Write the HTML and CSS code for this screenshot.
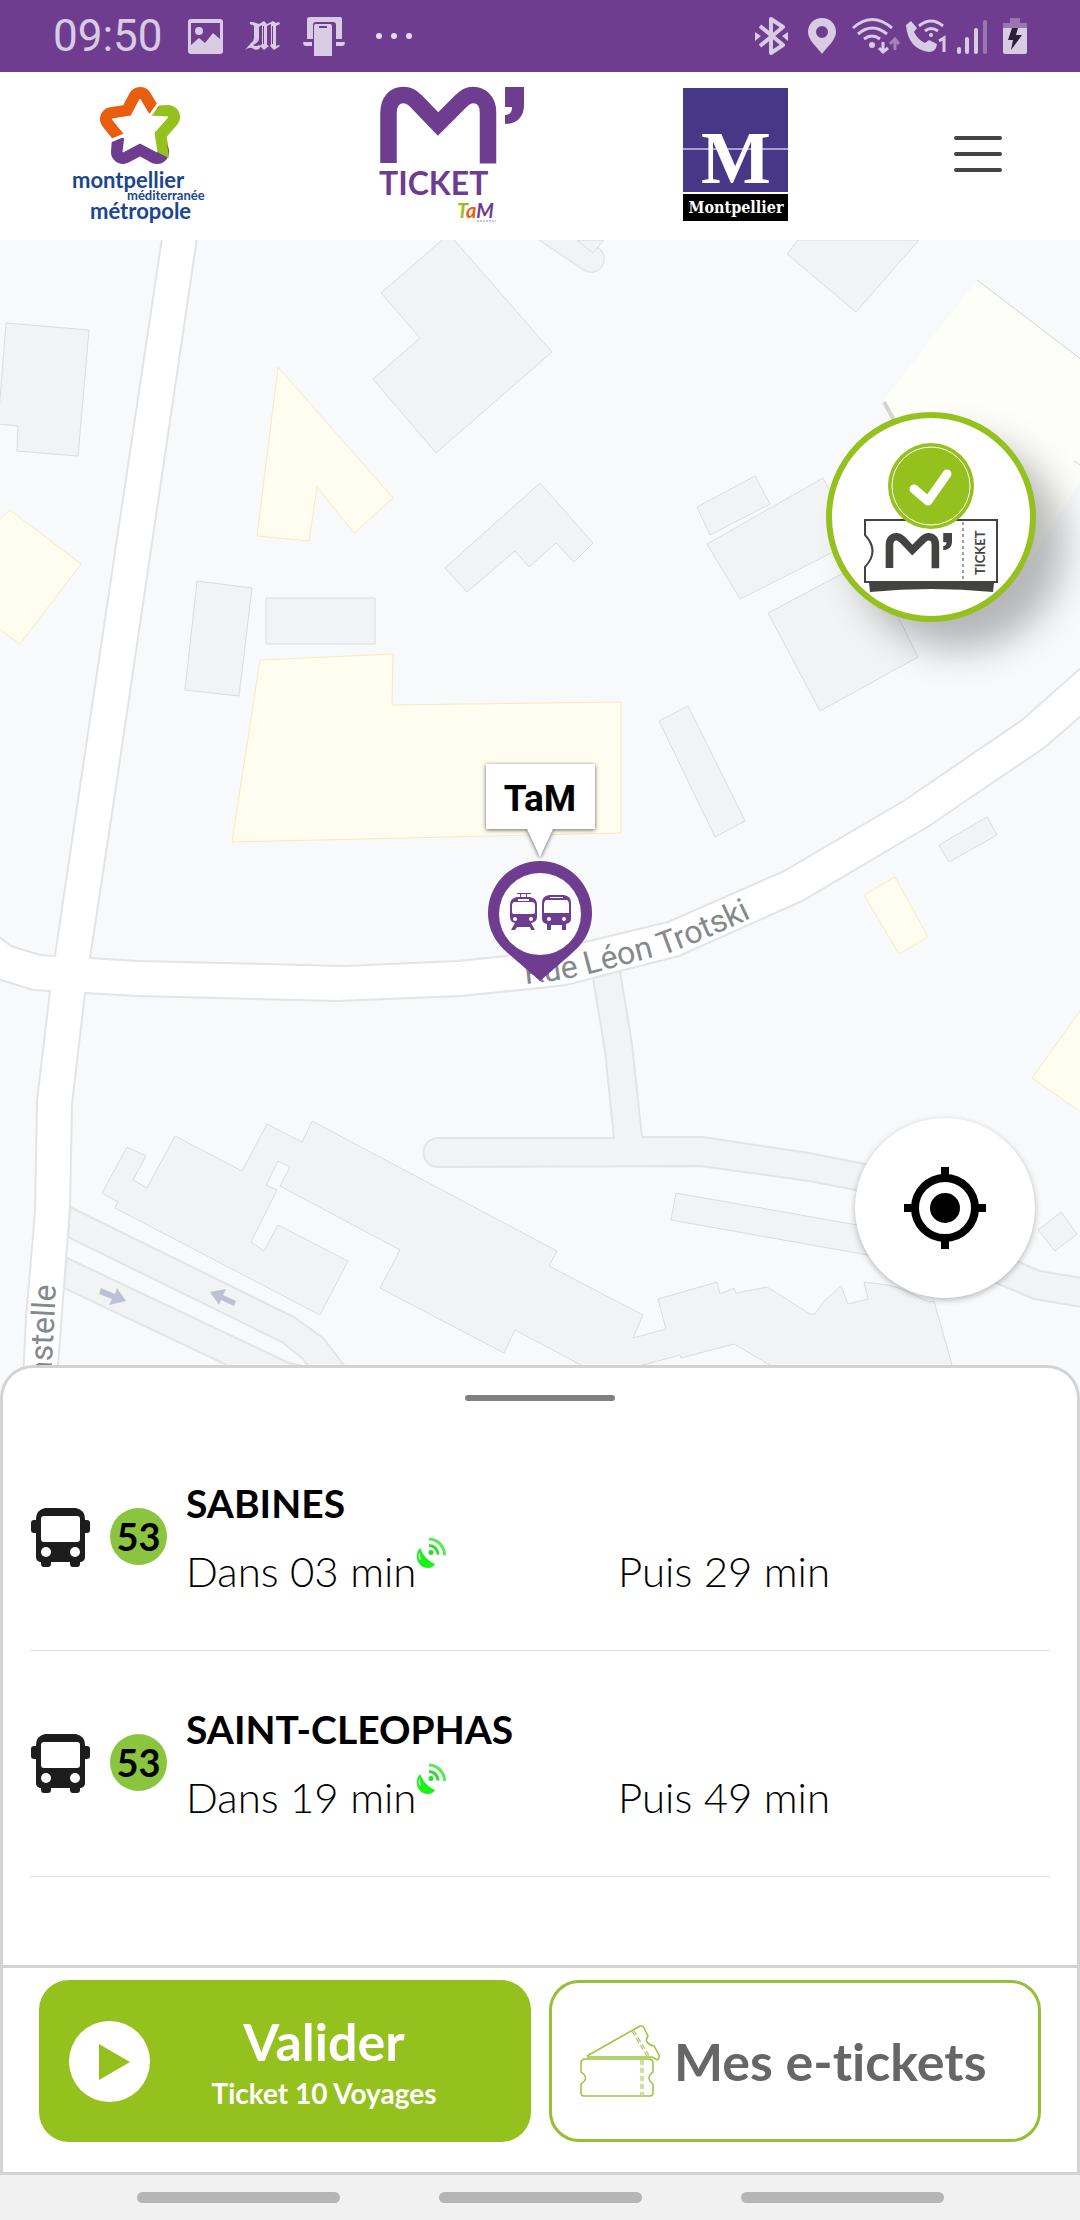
FILE: index.html
```html
<!DOCTYPE html>
<html lang="fr">
<head>
<meta charset="utf-8">
<meta name="viewport" content="width=device-width, initial-scale=1">
<title>M'Ticket TaM</title>
<link rel="stylesheet" href="styles.css">
</head>
<body>
<svg class="defs" aria-hidden="true">
  <symbol id="m-mark" viewBox="380 87 145 78" overflow="visible">
    <path d="M388.500 163V113C388.500 101 395 95 403.500 95C409 95 413 98 416 101L438 124L461 101C464 98 468 95 473 95C481 95 488 101 488 112V163.500" fill="none" stroke="currentColor" stroke-width="16.500"/>
    <path d="M505 87H524V105C524 117 517 124 505 124V115C510 115 512 112 512 107H505Z" fill="currentColor"/>
  </symbol>
  <symbol id="bus" viewBox="0 0 59 60">
    <path fill="#1d1d1d" fill-rule="evenodd" d="M14 1H45Q54 3 54 12V13H56Q59 13 59 16V23Q59 26 56 26H54V50Q54 54 50 55H49V57Q49 60 46 60H42Q39 60 39 57V55H20V57Q20 60 17 60H13Q10 60 10 57V55H9Q5 54 5 50V26H3Q0 26 0 23V16Q0 13 3 13H5V12Q5 3 14 1ZM13 9Q10 9 10 12V32Q10 35 13 35H46Q49 35 49 32V12Q49 9 46 9Z"/>
    <circle cx="15" cy="45" r="5" fill="#fff"/><circle cx="44" cy="45" r="5" fill="#fff"/>
  </symbol>
  <symbol id="live" viewBox="0 0 30 31">
    <path fill="#1bf01b" d="M4 11C-3 19 2 31 12 31Q17 31 19 27Q9 23 4 11Z"/>
    <path fill="#fff" d="M3 16Q2 21 4 23L5 22Q3 19 4 16Z"/>
    <circle cx="15" cy="15.500" r="2.500" fill="#2fd92f"/>
    <path fill="none" stroke="#30dc30" stroke-width="3" d="M13 8.500A9 9 0 0 1 22 17.500"/>
    <path fill="none" stroke="#56ea56" stroke-width="3" d="M13 2A16 16 0 0 1 28.500 18"/>
  </symbol>
</svg>

<div class="status">
  <div class="status-left">
    <time class="clock">09:50</time>
    <svg width="35" height="35" viewBox="0 0 35 35" aria-hidden="true"><path fill="#d9cbe3" fill-rule="evenodd" d="M3 0H32Q35 0 35 3V32Q35 35 32 35H3Q0 35 0 32V3Q0 0 3 0ZM3 4V26L11 19L17 24L25 14L32 20V4Z"/><circle cx="11" cy="12" r="4" fill="#d9cbe3"/></svg>
    <svg width="36" height="30" viewBox="0 0 36 30" fill="#d9cbe3" aria-hidden="true"><path d="M5 1Q4 4 8 4L9 5V17Q9 20 6 22L0 29Q4 26 7 27Q11 30 14 28L16 25L14 24Q12 26 8 24Q13 22 14 18V6L17 4V23L15 25L19 29L24 25L22 24V5L26 3V23L25 25L29 29L35 25L34 24L31 25V5L35 3L34 1L31 2L28 0L22 3L19 0L14 3L8 1Z"/><path stroke="#6f3d8f" d="M18.500 5V23M27.500 5V23"/></svg>
    <svg width="42" height="40" viewBox="0 0 42 40" aria-hidden="true"><path fill="#d9cbe3" d="M7 1H37Q39 1 39 3V23H33V9Q33 6 30 6H13Q10 6 10 9V23H4V3Q4 1 7 1ZM0 26H9V30H2Q0 29 0 26ZM33 26H42Q42 29 40 30H33ZM13 8H27Q29 8 29 10V40H11V10Q11 8 13 8Z"/><path stroke="#6f3d8f" stroke-width="2" d="M16 11H24"/></svg>
    <svg width="38" height="8" viewBox="0 0 38 8" fill="#e4daeb" aria-hidden="true"><circle cx="4" cy="4" r="3"/><circle cx="19" cy="4" r="3"/><circle cx="34" cy="4" r="3"/></svg>
  </div>
  <div class="status-right">
    <svg width="50" height="42" viewBox="748 16 50 42" aria-hidden="true"><path fill="none" stroke="#d9cbe3" stroke-width="4" stroke-linejoin="round" d="M760 27L783 46L771 54V20L783 28L760 47"/><path fill="#d9cbe3" d="M755 33L761 37L755 42ZM788 33L782 37L788 42Z"/></svg>
    <svg width="46" height="42" viewBox="798 16 46 42" aria-hidden="true"><path fill="#d9cbe3" fill-rule="evenodd" d="M822 19C830 19 836 25 836 33C836 41 827 48 822 55C817 48 808 41 808 33C808 25 814 19 822 19ZM822 27A6 6 0 1 0 822 39A6 6 0 1 0 822 27Z"/></svg>
    <svg width="59" height="42" viewBox="844 16 59 42" fill="none" aria-hidden="true"><path stroke="#d9cbe3" stroke-width="3" d="M853 29Q872 12 892 29M858 35Q872 23 887 35M864 40Q872 34 880 40"/><circle cx="872" cy="46" r="3" fill="#d9cbe3"/><path stroke="#d9cbe3" stroke-width="3" d="M883 43V53M879 49L883 53L888 49"/><path stroke="#a684b9" stroke-width="3" d="M895 51V41M890 45L895 40L899 45"/></svg>
    <svg width="49" height="42" viewBox="903 16 49 42" aria-hidden="true"><path fill="#d9cbe3" d="M906 26L911 22L917 29L914 33Q918 41 925 44L929 41L937 45Q936 53 929 53Q908 50 906 26Z"/><path fill="none" stroke="#d9cbe3" stroke-width="3" d="M919 27Q931 17 943 27M925 32Q931 27 938 32"/><circle cx="931" cy="36" r="2" fill="#d9cbe3"/><path fill="none" stroke="#d9cbe3" stroke-width="3" d="M939 42L944 39V53"/></svg>
    <svg width="44" height="42" viewBox="952 16 44 42" stroke="#d9cbe3" stroke-width="4" stroke-linecap="round" aria-hidden="true"><path d="M959 50V53M967 40V53M976 31V53"/><path stroke="#9b76b1" d="M985 23V53"/></svg>
    <svg width="38" height="42" viewBox="996 16 38 42" aria-hidden="true"><path fill="#9b76b1" d="M1010 19H1020V24H1027V30H1003V24H1010Z"/><path fill="#d9cbe3" d="M1003 29H1027V53Q1027 55 1025 55H1005Q1003 55 1003 53Z"/><path fill="#2d1d3b" d="M1012 29H1018L1016 36H1022L1011 51L1013 41H1008Z"/></svg>
  </div>
</div>

<header class="header">
  <svg class="logo" width="135" height="138" viewBox="72 85 135 138" role="img" aria-label="Montpellier Méditerranée Métropole">
    <g fill="none" stroke-width="24" stroke-linejoin="round">
      <path stroke="#95c11f" d="M150 118L168 117L154 133L157 152"/>
      <path stroke="#6f3d8f" d="M124 138L123 152L140 143L157 152"/>
      <path stroke="#e85d0e" d="M149 114L140 99L131 116L112 119L124 134"/>
    </g>
    <circle cx="157" cy="152" r="12" fill="#6f3d8f"/>
    <path fill="#95c11f" d="M154 133L166 136L169 158L157 152Z"/>
    <path fill="#fff" stroke="#fff" d="M140 99L150 116L168 117L154 133L157 152L140 143L123 152L125 135L112 119L131 116Z"/>
    <path stroke="#fff" stroke-width="3" d="M149 117L159 103M127 134L110 141"/>
    <g class="metro-text"><text x="72" y="188" class="metro-lg">montpellier</text><text x="127" y="200" class="metro-sm">méditerranée</text><text x="90" y="219" class="metro-lg">métropole</text></g>
  </svg>
  <svg class="logo" width="184" height="138" viewBox="353 85 184 138" role="img" aria-label="M'Ticket TaM">
    <use href="#m-mark" x="380" y="87" width="145" height="78" color="#6f3d8f"/>
    <text x="379" y="195" class="ticket-word">TICKET</text>
    <text x="457" y="218" class="tam-word"><tspan fill="#95c11f">T</tspan><tspan fill="#e85d0e">a</tspan><tspan fill="#6f3d8f">M</tspan></text>
    <path stroke="#8d8fc0" stroke-dasharray="2 1" d="M477 221H496"/>
  </svg>
  <svg class="logo" width="105" height="138" viewBox="683 85 105 138" role="img" aria-label="Ville de Montpellier">
    <path fill="#463886" d="M683 88H788V192H683Z"/><path stroke="#a79fcc" stroke-width="2" d="M683 149H788"/>
    <path fill="#000" d="M683 194H788V221H683Z"/>
    <text x="736" y="183" class="city-m">M</text><text x="736" y="213" class="city-name">Montpellier</text>
  </svg>
  <button class="menu" type="button" aria-label="Menu"><svg width="48" height="38" viewBox="0 0 48 38" stroke="#444" stroke-width="4" stroke-linecap="round" aria-hidden="true"><path d="M2 3H46M2 19H46M2 35H46"/></svg></button>
</header>

<main class="map">
  <svg class="map-canvas" viewBox="0 240 1080 1161" preserveAspectRatio="xMidYMin slice" role="img" aria-label="Plan du quartier, arrêt TaM, Rue Léon Trotski">
    <path fill="none" stroke="#e3e4e7" stroke-width="28" stroke-linecap="round" d="M535 221L591 259"/>
    <path fill="none" stroke="#f1f3f4" stroke-width="25" stroke-linecap="round" d="M535 221L591 259"/>
    <g class="lane">
      <path d="M70 1207L294 1317L323 1338L350 1373L350 1401H318V1380L303 1359L282 1342L68 1237Z"/>
      <path d="M67 1258L289 1363L330 1372V1401H280L227 1365L64 1288Z"/>
      <path d="M438 1138L614 1138L605 1051L593 978L585 960L618 955L620 971L632 1044L642 1137L703 1137L809 1153L865 1164L1019 1262L1040 1271L1082 1278V1307L1034 1299L996 1283L880 1195L856 1190L809 1181L700 1166L438 1167A14 14 0 0 1 438 1138Z"/>
    </g>
    <g class="block">
      <path d="M6 323L89 330L78 456L17 451L18 426L-2 424Z"/>
      <path d="M449 234L381 293L420 338L373 379L436 453L552 352Z"/>
      <path d="M197 581L252 588L239 696L185 690Z"/>
      <path d="M266 598H375V644H266Z"/>
      <path d="M445 568L540 483L593 543L574 562L556 543L529 567L515 551L467 592Z"/>
      <path d="M577 240L593 253L604 240Z"/>
      <path d="M798 240L787 254L856 312L919 240Z"/>
      <path d="M755 476L770 504L710 535L697 507Z"/>
      <path d="M707 544L823 478L857 540L740 599Z"/>
      <path d="M768 613L870 559L918 657L820 711Z"/>
      <path d="M659 721L688 706L745 821L715 837Z"/>
      <path d="M939 845L987 817L997 835L949 862Z"/>
      <path d="M676 1193L880 1229L890 1259L671 1220Z"/>
      <path d="M1061 1212L1077 1234L1055 1251L1038 1230Z"/>
      <path d="M127 1147L146 1156L133 1180L147 1188L175 1136L242 1171L267 1124L302 1142L312 1121L540 1242L557 1251L549 1266L643 1315L633 1338L666 1329L658 1299L717 1282L720 1294L734 1288L736 1293L767 1287L810 1314L815 1314L824 1301L841 1286L848 1304L868 1299L864 1282L888 1285L902 1289L929 1302L934 1301L952 1365L960 1401L830 1401L770 1365L734 1344L681 1358L680 1355L643 1365L600 1375L581 1365L515 1330L504 1353L380 1288L400 1250L280 1186L290 1167L278 1161L266 1185L277 1190L251 1242L264 1251L278 1225L348 1261L320 1315L115 1208L118 1202L102 1193Z"/>
    </g>
    <path fill="#fdfdfa" d="M977 280L1082 359V480L1030 560L940 520L883 401Z"/>
    <path fill="none" stroke="#d3d3cf" d="M977 280L1082 360M1074 461L1082 466"/><path stroke="#d5d4cf" stroke-width="4" d="M884 402L895 422"/>
    <g class="shop">
      <path d="M278 367L393 498L354 533L317 487L309 541L257 536Z"/>
      <path d="M-2 521L10 510L81 564L20 644L-2 628Z"/>
      <path d="M260 660L393 654L392 705L621 702V833L232 842Z"/>
      <path d="M864 895L895 877L928 937L899 954Z"/>
      <path d="M1082 1008L1032 1078L1082 1113Z"/>
    </g>
    <path class="street" d="M162 238L78 800L55 956L40 955L11 946L-2 936V979L33 990L50 991L37 1101L35 1212L26 1318L22 1401H56L58 1365L70 1207L72 1104L85 993L138 996L337 1001L461 996L540 988L566 985L620 971L679 956L802 901L929 826L967 800L1044 748L1082 715V667L1022 720L905 800L784 871L668 922L585 942L506 956L458 961L344 966L138 961L90 958L114 800L197 238Z"/>
    <path fill="#bdc1d3" d="M101 1288L115 1294L117 1288L126 1301L109 1305L112 1299L99 1294ZM236 1301L223 1295L226 1289L210 1292L219 1305L221 1300L234 1306Z"/>
    <path id="trotski" fill="none" d="M525 984Q560 981 589 974L669 953Q712 937 755 916L800 894"/>
    <text class="road-name"><textPath href="#trotski">Rue Léon Trotski</textPath></text>
    <text class="road-name" text-anchor="end" transform="translate(56 1285) rotate(-87)">astelle</text>

    <path class="callout" d="M486 764H595V829H553L540 857L527 829H486Z"/>
    <text class="stop-name" x="540" y="811">TaM</text>
    <path fill="#6f3d8f" d="M540 861A52 52 0 0 1 592 913C592 932 582 945 570 955L540 981L510 955C498 945 488 932 488 913A52 52 0 0 1 540 861Z"/>
    <circle cx="540" cy="914" r="41" fill="#fff"/>
    <g fill="#6f3d8f">
      <path fill-rule="evenodd" d="M517 897H530Q537 898 537 905V917Q537 922 531 923L535 930H531L530 927H517L515 930H511L515 923Q510 922 510 917V905Q510 898 517 897ZM515 902Q512 902 512 906V912Q512 914 514 914H533Q535 914 535 912V906Q535 902 532 902Z"/>
      <path fill="none" stroke="#6f3d8f" d="M517 893.500H531M520.500 893V897M526.500 893V897"/>
      <path fill-rule="evenodd" d="M549 895H564Q571 896 571 903V919Q571 923 566 924V930H562V925H551V930H547V924Q542 923 542 919V903Q542 896 549 895ZM546 900Q544 901 544 905V913H569V905Q569 901 567 900Z"/>
    </g>
    <g fill="#fff"><path d="M518 899H529V901H518ZM550 897H563V898H550Z"/><circle cx="515" cy="919" r="2"/><circle cx="531" cy="919" r="2"/><circle cx="549" cy="919" r="2"/><circle cx="564" cy="919" r="2"/></g>
  </svg>

  <button class="ticket-fab" type="button" aria-label="Ticket valide">
    <svg width="198" height="198" viewBox="6 6 198 198" aria-hidden="true">
      <path fill="#fff" stroke="#434342" stroke-width="2" d="M39 108H171V170H39V155Q54 139 39 123Z"/>
      <path stroke="#434342" stroke-dasharray="3 3" d="M137 110V169"/>
      <path fill="#434342" d="M43 171H168L167 180Q105 174 44 180Z"/>
      <use href="#m-mark" x="59" y="121" width="68" height="36" color="#434342"/>
      <text class="fab-word" transform="translate(159 163) rotate(-90)">TICKET</text>
      <circle cx="105" cy="74" r="43" fill="#95c11f"/><circle cx="105" cy="74" r="39" fill="none" stroke="#fff"/>
      <path fill="none" stroke="#fff" stroke-width="9" stroke-linecap="round" stroke-linejoin="round" d="M88 77L102 89L121 62"/>
    </svg>
  </button>
  <button class="locate" type="button" aria-label="Ma position">
    <svg width="82" height="82" viewBox="0 0 82 82" fill="none" stroke="#000" stroke-width="8" aria-hidden="true"><circle cx="41" cy="41" r="30"/><circle cx="41" cy="41" r="15" fill="#000" stroke="none"/><path d="M41 0V9M41 73V82M0 41H9M73 41H82"/></svg>
  </button>
</main>

<section class="sheet" aria-label="Prochains passages">
  <div class="handle"></div>
  <ul class="lines">
    <li class="line">
      <svg class="line-bus" aria-hidden="true"><use href="#bus"/></svg>
      <span class="badge">53</span>
      <div class="info">
        <h2 class="dest">SABINES</h2>
        <span class="next">Dans 03 min<svg class="live" aria-hidden="true"><use href="#live"/></svg></span>
        <span class="next">Puis 29 min</span>
      </div>
    </li>
    <li class="line">
      <svg class="line-bus" aria-hidden="true"><use href="#bus"/></svg>
      <span class="badge">53</span>
      <div class="info">
        <h2 class="dest">SAINT-CLEOPHAS</h2>
        <span class="next">Dans 19 min<svg class="live" aria-hidden="true"><use href="#live"/></svg></span>
        <span class="next">Puis 49 min</span>
      </div>
    </li>
  </ul>
</section>

<footer class="actions">
  <button class="btn btn-primary" type="button">
    <svg width="81" height="81" viewBox="0 0 81 81" aria-hidden="true"><circle cx="40.500" cy="40.500" r="40.500" fill="#fff"/><path fill="#95c11f" d="M30 23L61 41L30 59Z"/></svg>
    <span class="btn-text"><span class="btn-title">Valider</span><span class="btn-sub">Ticket 10 Voyages</span></span>
  </button>
  <button class="btn btn-outline" type="button">
    <svg width="80" height="72" viewBox="0 0 80 72" fill="none" stroke="#9cc43b" stroke-width="1.500" aria-hidden="true">
      <path d="M4 34H70Q73 35 73 38V47Q65 53 73 59V68Q73 71 70 71H4Q1 71 1 68V59Q10 53 1 47V38Q1 35 4 34ZM7 31L60 1Q62 0 64 3L68 11Q63 18 74 21L79 30Q80 34 77 35L72 32H7"/>
      <path stroke-width="3" stroke-dasharray="5 3" d="M62 35V71M53 6L68 31"/>
      <path stroke="#fff" stroke-width="1" d="M62 35V71M53 6L68 31"/>
    </svg>
    <span class="btn-title">Mes e-tickets</span>
  </button>
</footer>
<nav class="gesture" aria-hidden="true"><span class="pill"></span><span class="pill"></span><span class="pill"></span></nav>
</body>
</html>
```
FILE: styles.css
```css
* { box-sizing: border-box; }

body {
  margin: 0;
  min-height: 100vh;
  display: flex;
  flex-direction: column;
  background: #fff;
  color: #000;
  font-family: Lato, "Open Sans", sans-serif;
  font-variant-ligatures: none;
}

button {
  margin: 0;
  padding: 0;
  border: 0;
  background: none;
  font: inherit;
  color: inherit;
}

svg { display: block; flex: none; }
.defs { position: absolute; width: 0; height: 0; }

/* Status bar */
.status {
  display: flex;
  justify-content: space-between;
  align-items: center;
  height: 72px;
  padding: 0 46px 0 53px;
  background: #6f3d8f;
}
.status-left { display: flex; align-items: center; gap: 22px; }
.status-left > :first-child { margin-right: 3px; }
.status-left > :last-child { margin-left: 8px; }
.status-right { display: flex; align-items: center; }
.clock { font: 400 44px/72px Roboto, sans-serif; color: #d9cbe3; }

/* Logos */
.header {
  display: flex;
  justify-content: space-between;
  align-items: center;
  height: 168px;
  padding: 0 58px 4px 72px;
}
.logo { overflow: visible; }
.metro-text { fill: #1b4690; font-weight: 700; }
.metro-lg { font-size: 22px; }
.metro-sm { font-size: 13px; }
.ticket-word { font-size: 32px; font-weight: 700; fill: #6f3d8f; }
.tam-word { font-size: 20px; font-weight: 700; font-style: italic; }
.city-m { font: 700 74px "Liberation Serif", serif; fill: #fff; text-anchor: middle; }
.city-name { font: 700 16px "DejaVu Serif Condensed", "DejaVu Serif", serif; fill: #fff; text-anchor: middle; }
.menu { display: grid; place-items: center; width: 88px; height: 88px; }

/* Map */
.map {
  position: relative;
  flex: 1;
  min-height: 600px;
  overflow: hidden;
  background: #f8f9fb;
}
.map-canvas { position: absolute; inset: 0; width: 100%; height: 100%; }
.block { fill: #f1f3f4; stroke: #dadce0; }
.lane { fill: #f1f3f4; stroke: #e3e4e7; stroke-width: 2px; }
.shop { fill: #fffcf0; stroke: #f9e9bd; }
.street { fill: #fff; stroke: #e3e4e7; stroke-width: 2px; }
.road-name { font: 400 32px Roboto, sans-serif; fill: #83898c; }
.callout { fill: #fff; filter: drop-shadow(0 1px 2px #0009); }
.stop-name { font: 700 37px Roboto, sans-serif; text-anchor: middle; }
.ticket-fab {
  position: absolute;
  top: 172px;
  right: 44px;
  display: grid;
  place-items: center;
  width: 210px;
  height: 210px;
  border: 6px solid #95c11f;
  border-radius: 50%;
  background: #fff;
  box-shadow: 28px 28px 36px #0004;
}
.fab-word { font-size: 13px; font-weight: 700; fill: #434342; }
.locate {
  position: absolute;
  right: 45px;
  bottom: 103px;
  display: grid;
  place-items: center;
  width: 180px;
  height: 180px;
  border-radius: 50%;
  background: #fff;
  box-shadow: 0 2px 6px #0004;
}

/* Departures */
.sheet {
  position: relative;
  margin-top: -36px;
  padding: 27px 27px 88px;
  border: 3px solid #d3d3d3;
  border-width: 3px 3px 0;
  border-radius: 33px 33px 0 0;
  background: #fff;
}
.handle { width: 150px; height: 6px; margin: 0 auto 24px; border-radius: 3px; background: #808080; }
.lines { margin: 0; padding: 0; list-style: none; }
.line {
  display: flex;
  align-items: center;
  height: 226px;
  padding-bottom: 2px;
  border-bottom: 1px solid #dedede;
}
.line-bus { width: 59px; height: 60px; margin: 0 20px 0 1px; }
.badge {
  width: 57px;
  height: 57px;
  border-radius: 50%;
  background: #8bc53f;
  font-size: 38px;
  font-weight: 700;
  line-height: 57px;
  text-align: center;
}
.info {
  flex: 1;
  display: grid;
  grid-template-columns: 1fr 1fr;
  margin-left: 19px;
  line-height: 68px;
}
.dest { grid-column: 1 / -1; margin: 0; font-size: 39px; font-weight: 700; }
.next { display: flex; font-size: 42px; font-weight: 300; }
.live { width: 30px; height: 31px; }

/* Actions */
.actions {
  display: grid;
  grid-template-columns: 1fr 1fr;
  gap: 18px;
  padding: 12px 36px 30px;
  border: 3px solid #d3d3d3;
}
.btn {
  display: flex;
  align-items: center;
  height: 162px;
  border-radius: 30px;
}
.btn-primary { padding: 0 33px 0 30px; background: #95c11f; color: #fff; }
.btn-outline { gap: 14px; padding: 0 28px; border: 3px solid #95bf34; color: #666; white-space: nowrap; }
.btn-text { flex: 1; display: flex; flex-direction: column; align-items: center; }
.btn-title { font-size: 52px; font-weight: 700; line-height: 64px; }
.btn-sub { font-size: 28px; font-weight: 700; line-height: 40px; }

.gesture {
  display: flex;
  justify-content: center;
  gap: 99px;
  height: 45px;
  padding-top: 17px;
  background: #f1f1f1;
}
.pill { width: 203px; height: 11px; border-radius: 6px; background: #b5b5b5; }
```
